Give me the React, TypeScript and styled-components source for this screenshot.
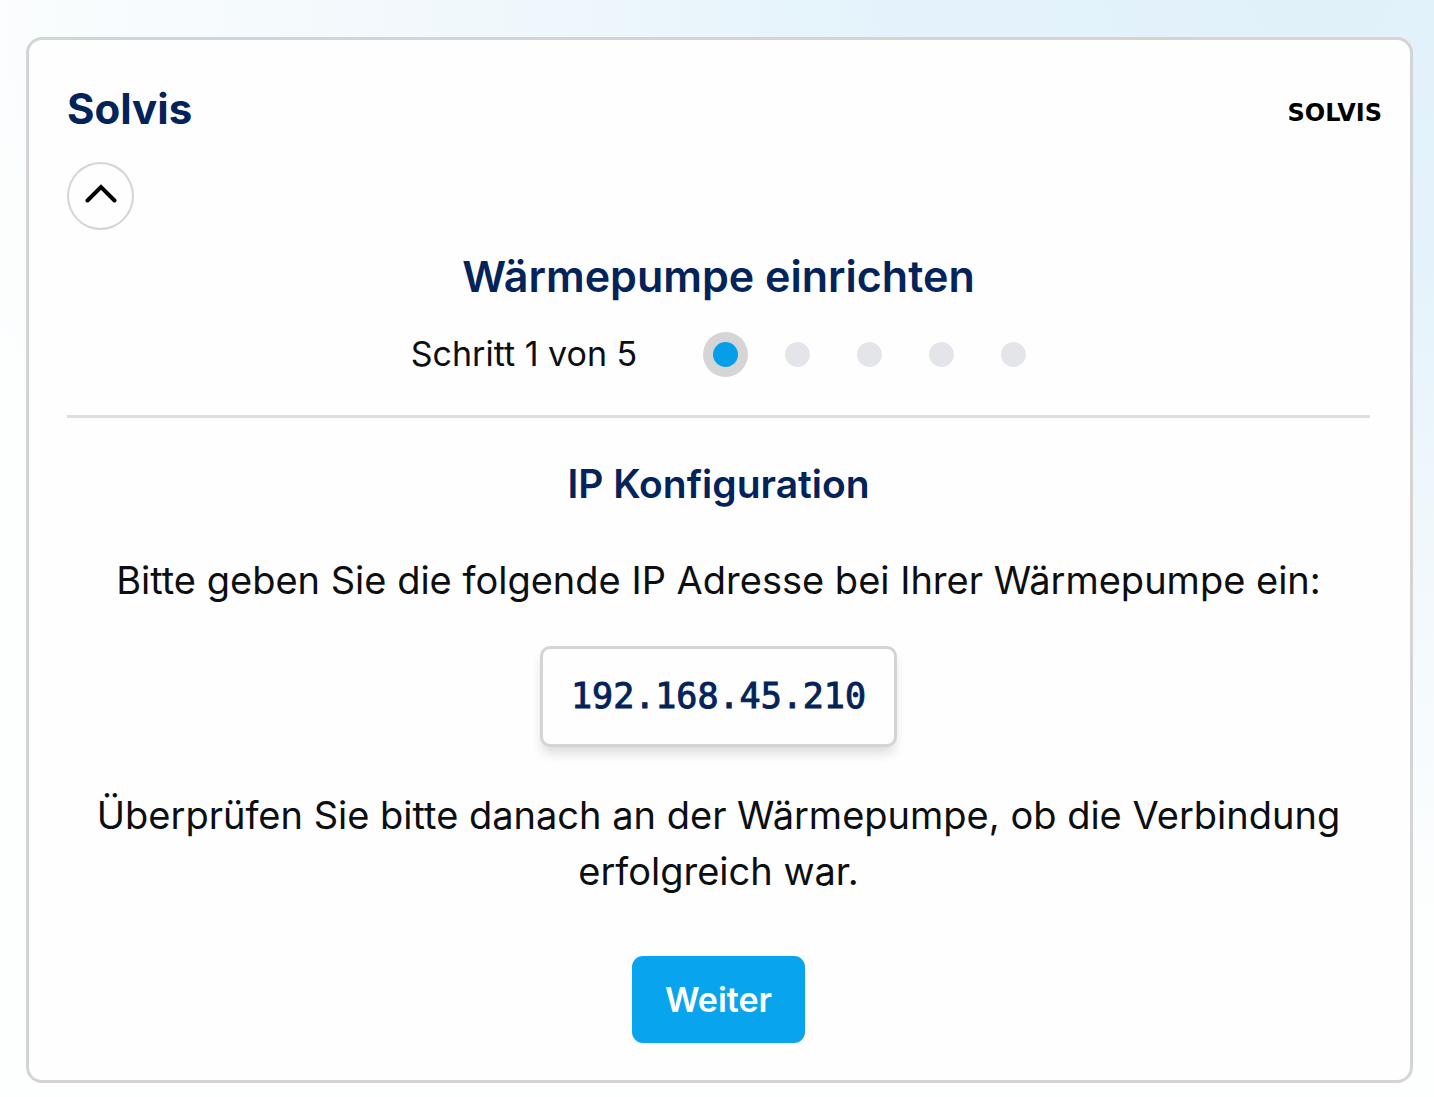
import React from "react";
import styled, { createGlobalStyle } from "styled-components";

const GlobalStyle = createGlobalStyle`
  *, *::before, *::after { box-sizing: border-box; }
  html { min-height: 100%; background: #fdfefe; }
  body {
    margin: 0;
    color: #0c0e12;
    font-family: Inter, "Liberation Sans", sans-serif;
  }
  h1, h2, h3, p { margin: 0; }
`;

const Page = styled.main`
  min-height: 100vh;
  padding: 37px 21px 14px 26px;
  background: radial-gradient(ellipse 100% 84% at 92% 0%, #e1f1fa 0%, #e4f3fb 30%, #f1f8fc 60%, #fdfefe 100%);
`;

const Card = styled.section`
  padding: 41px 0 37px;
  background: #fefefe;
  border: 3px solid #d4d4d5;
  border-radius: 16px;
`;

const CardHeader = styled.header`
  display: flex;
  align-items: center;
  justify-content: space-between;
  padding: 0 28px 0 38px;
`;

const Title = styled.h1`
  color: #03235a;
  font-size: 42px;
  font-weight: 700;
  line-height: 56px;
`;

const Logo = styled.span`
  padding-top: 8px;
  color: #000;
  font-family: "DejaVu Sans", sans-serif;
  font-size: 24px;
  font-weight: 700;
  line-height: 32px;
`;

const Content = styled.div`
  display: flex;
  flex-direction: column;
  align-items: center;
  padding: 25px 40px 0 38px;
  text-align: center;
`;

const CollapseButton = styled.button`
  display: grid;
  place-items: center;
  align-self: flex-start;
  width: 67px;
  height: 68px;
  margin-bottom: 18px;
  padding: 0 0 6px;
  color: #000;
  background: transparent;
  border: 2px solid #d4d4d5;
  border-radius: 50%;
  cursor: pointer;
`;

const WizardTitle = styled.h2`
  color: #03235a;
  font-size: 43px;
  font-weight: 600;
  line-height: 56px;
`;

const Progress = styled.div`
  display: flex;
  align-items: center;
  gap: 76px;
  padding: 26px 0 37px;
  font-size: 34px;
  line-height: 48px;
`;

const Steps = styled.ol`
  display: flex;
  gap: 47px;
  margin: 0;
  padding: 0;
  list-style: none;
`;

const Step = styled.li<{ $active: boolean }>`
  width: 25px;
  height: 25px;
  border-radius: 50%;
  background: ${({ $active }) => ($active ? "#049fe8" : "#e4e5ea")};
  box-shadow: ${({ $active }) => ($active ? "0 0 0 10px #d5d5d5" : "none")};
`;

const Divider = styled.hr`
  align-self: stretch;
  height: 3px;
  margin: 0 0 38px;
  background: #dedede;
  border: 0;
`;

const StepTitle = styled.h3`
  color: #03235a;
  font-size: 39px;
  font-weight: 600;
  line-height: 56px;
`;

const Text = styled.p`
  padding: 40px 0 38px;
  font-size: 38px;
  line-height: 56px;
`;

const IpAddress = styled.output`
  padding: 24px 28px;
  color: #03235a;
  background: #fefefe;
  border: 3px solid #d4d4d5;
  border-radius: 10px;
  box-shadow: 0 8px 12px -2px rgba(0, 0, 0, 0.14);
  font-family: "DejaVu Sans Mono", monospace;
  font-size: 35px;
  line-height: 47px;
  -webkit-text-stroke: 1px currentColor;
`;

const NextButton = styled.button`
  margin-top: 19px;
  padding: 20px 33px;
  color: #fff;
  background: #08a4ee;
  border: 0;
  border-radius: 11px;
  font-family: inherit;
  font-size: 34px;
  font-weight: 600;
  line-height: 47px;
  cursor: pointer;
`;

const STEP_COUNT = 5;
const CURRENT_STEP = 1;

const ChevronUp = () => (
  <svg width="32" height="20" viewBox="0 0 32 20" fill="none" aria-hidden="true">
    <path d="M2.5 17.5 16 4l13.5 13.5" stroke="currentColor" strokeWidth="4" strokeLinecap="round" />
  </svg>
);

export default function App() {
  return (
    <>
      <GlobalStyle />
      <Page>
        <Card>
          <CardHeader>
            <Title>Solvis</Title>
            <Logo>SOLVIS</Logo>
          </CardHeader>
          <Content>
            <CollapseButton type="button" aria-label="Einklappen" aria-expanded="true">
              <ChevronUp />
            </CollapseButton>
            <WizardTitle>Wärmepumpe einrichten</WizardTitle>
            <Progress>
              <span>
                Schritt {CURRENT_STEP} von {STEP_COUNT}
              </span>
              <Steps aria-hidden="true">
                {Array.from({ length: STEP_COUNT }, (_, i) => (
                  <Step key={i} $active={i + 1 === CURRENT_STEP} />
                ))}
              </Steps>
            </Progress>
            <Divider />
            <StepTitle>IP Konfiguration</StepTitle>
            <Text>Bitte geben Sie die folgende IP Adresse bei Ihrer Wärmepumpe ein:</Text>
            <IpAddress>192.168.45.210</IpAddress>
            <Text>
              Überprüfen Sie bitte danach an der Wärmepumpe, ob die Verbindung erfolgreich war.
            </Text>
            <NextButton type="button">Weiter</NextButton>
          </Content>
        </Card>
      </Page>
    </>
  );
}
